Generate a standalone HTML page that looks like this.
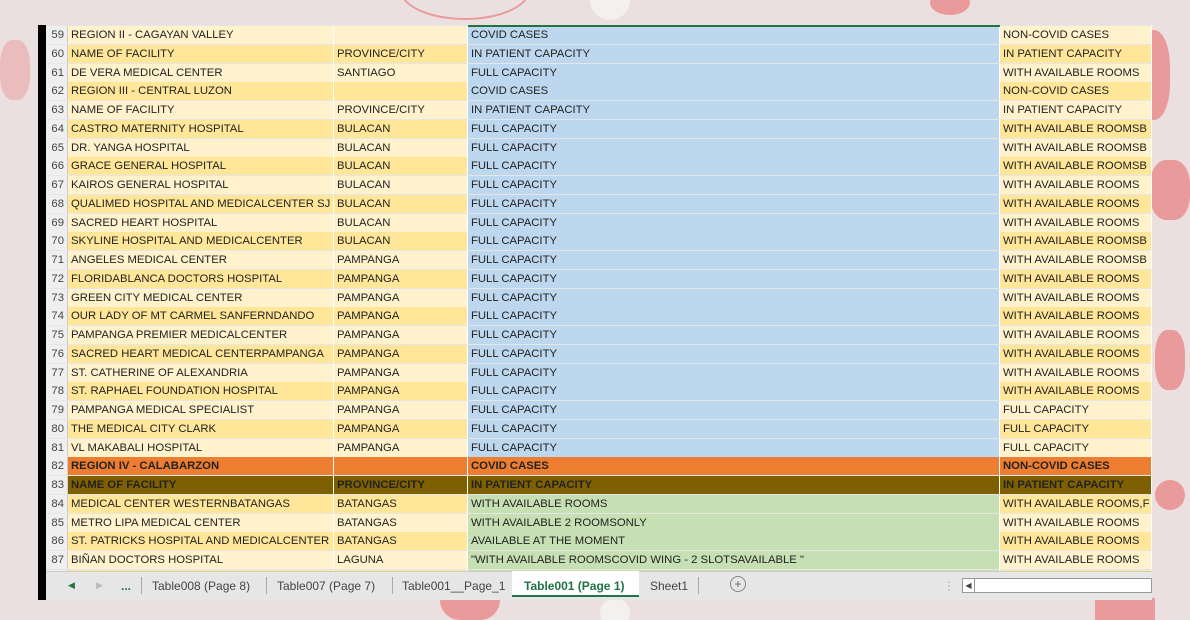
<!DOCTYPE html>
<html><head><style>
*{margin:0;padding:0;box-sizing:border-box}
html,body{width:1190px;height:620px;overflow:hidden}
body{background:#ebdfe0;position:relative;font-family:"Liberation Sans",sans-serif}
.deco{position:absolute;background:#e99a9b;border-radius:50%}
#sheet{position:absolute;left:38px;top:25px;width:1114px;height:575px;background:#e6e6e6;border-left:8px solid #000;overflow:hidden}
.row{position:absolute;left:0;height:18.75px;width:1106px;font-size:11.3px;color:#222;line-height:18px}
.row div{position:absolute;top:0;height:18px;padding-left:3px;white-space:nowrap;overflow:hidden;border-right:1px solid #fff}
.n{left:0;width:22px;background:#efefef;color:#444;text-align:right;padding-right:3px;border-right:1px solid #ccc!important}
.a{left:22px;width:266px}.b{left:288px;width:134px}.c{left:422px;width:532px}.d{left:954px;width:152px}
.l{background:#fff2cc}.k{background:#ffe699}.bl{background:#bdd7ee}.g{background:#c6e0b4}.o{background:#ed7d31;font-weight:bold}.br{background:#7f6000;font-weight:bold}
#tabs{position:absolute;left:0;top:546px;width:1106px;height:29px;background:#e6e6e6;border-top:1px solid #ccc;font-size:12px;color:#444}
#tabs span{position:absolute;top:7px}
.sep{position:absolute;top:5px;width:1px;height:17px;background:#aaa}
</style></head><body>
<div class="deco" style="left:590px;top:-20px;width:40px;height:40px;background:#f4f0f0"></div>
<div class="deco" style="left:400px;top:-40px;width:130px;height:60px;background:none;border:2px solid #e99a9b"></div>
<div class="deco" style="left:930px;top:-10px;width:40px;height:25px"></div>
<div class="deco" style="left:1150px;top:160px;width:40px;height:60px;border-radius:40%"></div>
<div class="deco" style="left:1155px;top:330px;width:30px;height:60px;border-radius:40%"></div>
<div class="deco" style="left:1155px;top:480px;width:30px;height:30px"></div>
<div class="deco" style="left:1130px;top:30px;width:40px;height:90px;border-radius:40%"></div>
<div class="deco" style="left:0px;top:40px;width:30px;height:60px;border-radius:40%;opacity:.5"></div>
<div class="deco" style="left:440px;top:600px;width:60px;height:20px;border-radius:0 0 30px 30px"></div>
<div class="deco" style="left:600px;top:598px;width:30px;height:30px;background:#f4f0f0"></div>
<div class="deco" style="left:1095px;top:598px;width:60px;height:22px;background:#e99a9b;border-radius:0"></div>
<div id="sheet">
<div style="position:absolute;left:422px;top:0;width:532px;height:2px;background:#217346;z-index:2"></div>
<div id="rows"></div>
<div id="tabs">
<span style="left:22px;color:#217346;font-size:9px;top:8px">◀</span>
<span style="left:50px;color:#bbb;font-size:9px;top:8px">▶</span>
<span style="left:75px;color:#217346;font-weight:bold">...</span>
<div class="sep" style="left:95px"></div>
<span style="left:106px">Table008 (Page 8)</span>
<div class="sep" style="left:220px"></div>
<span style="left:231px">Table007 (Page 7)</span>
<div class="sep" style="left:346px"></div>
<div style="position:absolute;left:466px;top:-1px;width:127px;height:26px;background:#fff;border-bottom:2px solid #217346"></div>
<span style="left:356px">Table001__Page_1</span>
<span style="left:478px;color:#217346;font-weight:bold">Table001 (Page 1)</span>
<span style="left:604px">Sheet1</span>
<div class="sep" style="left:652px"></div>
<span style="left:684px;top:4px;width:16px;height:16px;border:1px solid #888;border-radius:50%;text-align:center;line-height:14px;color:#666">+</span>
<span style="left:897px;color:#aaa">⋮</span>
<div style="position:absolute;left:916px;top:6px;width:190px;height:15px;background:#fff;border:1px solid #999"><div style="width:12px;height:13px;border-right:1px solid #999;font-size:8px;text-align:center;line-height:13px">◀</div></div>
</div>
</div>
<script>
var d=[
["REGION II - CAGAYAN VALLEY","","COVID CASES","NON-COVID CASES"],
["NAME OF FACILITY","PROVINCE/CITY","IN PATIENT CAPACITY","IN PATIENT CAPACITY"],
["DE VERA MEDICAL CENTER","SANTIAGO","FULL CAPACITY","WITH AVAILABLE ROOMS"],
["REGION III - CENTRAL LUZON","","COVID CASES","NON-COVID CASES"],
["NAME OF FACILITY","PROVINCE/CITY","IN PATIENT CAPACITY","IN PATIENT CAPACITY"],
["CASTRO MATERNITY HOSPITAL","BULACAN","FULL CAPACITY","WITH AVAILABLE ROOMSB"],
["DR. YANGA HOSPITAL","BULACAN","FULL CAPACITY","WITH AVAILABLE ROOMSB"],
["GRACE GENERAL HOSPITAL","BULACAN","FULL CAPACITY","WITH AVAILABLE ROOMSB"],
["KAIROS GENERAL HOSPITAL","BULACAN","FULL CAPACITY","WITH AVAILABLE ROOMS"],
["QUALIMED HOSPITAL AND MEDICALCENTER SJ","BULACAN","FULL CAPACITY","WITH AVAILABLE ROOMS"],
["SACRED HEART HOSPITAL","BULACAN","FULL CAPACITY","WITH AVAILABLE ROOMS"],
["SKYLINE HOSPITAL AND MEDICALCENTER","BULACAN","FULL CAPACITY","WITH AVAILABLE ROOMSB"],
["ANGELES MEDICAL CENTER","PAMPANGA","FULL CAPACITY","WITH AVAILABLE ROOMSB"],
["FLORIDABLANCA DOCTORS HOSPITAL","PAMPANGA","FULL CAPACITY","WITH AVAILABLE ROOMS"],
["GREEN CITY MEDICAL CENTER","PAMPANGA","FULL CAPACITY","WITH AVAILABLE ROOMS"],
["OUR LADY OF MT CARMEL SANFERNDANDO","PAMPANGA","FULL CAPACITY","WITH AVAILABLE ROOMS"],
["PAMPANGA PREMIER MEDICALCENTER","PAMPANGA","FULL CAPACITY","WITH AVAILABLE ROOMS"],
["SACRED HEART MEDICAL CENTERPAMPANGA","PAMPANGA","FULL CAPACITY","WITH AVAILABLE ROOMS"],
["ST. CATHERINE OF ALEXANDRIA","PAMPANGA","FULL CAPACITY","WITH AVAILABLE ROOMS"],
["ST. RAPHAEL FOUNDATION HOSPITAL","PAMPANGA","FULL CAPACITY","WITH AVAILABLE ROOMS"],
["PAMPANGA MEDICAL SPECIALIST","PAMPANGA","FULL CAPACITY","FULL CAPACITY"],
["THE MEDICAL CITY CLARK","PAMPANGA","FULL CAPACITY","FULL CAPACITY"],
["VL MAKABALI HOSPITAL","PAMPANGA","FULL CAPACITY","FULL CAPACITY"],
["REGION IV - CALABARZON","","COVID CASES","NON-COVID CASES"],
["NAME OF FACILITY","PROVINCE/CITY","IN PATIENT CAPACITY","IN PATIENT CAPACITY"],
["MEDICAL CENTER WESTERNBATANGAS","BATANGAS","WITH AVAILABLE ROOMS","WITH AVAILABLE ROOMS,F"],
["METRO LIPA MEDICAL CENTER","BATANGAS","WITH AVAILABLE 2 ROOMSONLY","WITH AVAILABLE ROOMS"],
["ST. PATRICKS HOSPITAL AND MEDICALCENTER","BATANGAS","AVAILABLE AT THE MOMENT","WITH AVAILABLE ROOMS"],
["BIÑAN DOCTORS HOSPITAL","LAGUNA","\"WITH AVAILABLE ROOMSCOVID WING - 2 SLOTSAVAILABLE \"","WITH AVAILABLE ROOMS"],
["","","",""]];
var h="";
d.forEach(function(r,i){var n=59+i,t=(1+i*18.75).toFixed(2);var s=i%2?"k":"l";var c,e;
if(n==82){s="o";c="o";e="o"}else if(n==83){s="br";c="br";e="br"}else{c=n<82?"bl":"g";e=s}
h+='<div class="row" style="top:'+t+'px"><div class="n">'+n+'</div><div class="a '+s+'">'+r[0]+'</div><div class="b '+s+'">'+r[1]+'</div><div class="c '+c+'">'+r[2]+'</div><div class="d '+e+'">'+r[3]+'</div></div>';});
document.getElementById("rows").innerHTML=h;
</script>
</body></html>
